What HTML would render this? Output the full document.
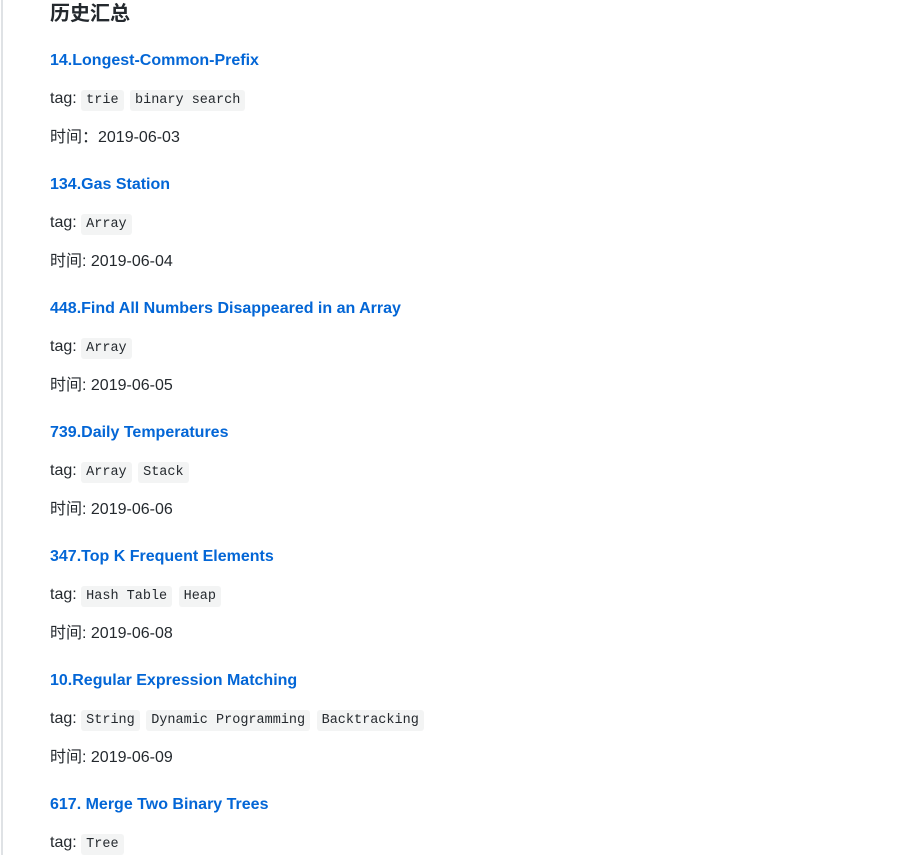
<!DOCTYPE html>
<html><head><meta charset="utf-8"><style>
html,body{margin:0;background:#fff;width:908px;height:855px;overflow:hidden}
body{position:relative;font-family:"Liberation Sans","Noto Sans CJK SC",sans-serif;color:#24292e;font-size:16px}
.bar{position:absolute;left:1px;top:0;width:2px;height:855px;background:#dfe2e5}
.wrap{position:absolute;left:50px;top:2px;height:853px;overflow:hidden}
h2{margin:0;height:47px;font-size:20px;line-height:24px;font-weight:bold}
.l{height:38px;line-height:24px;font-weight:bold;color:#0366d6}
.t{height:39px;line-height:24px}
.d{height:47px;line-height:24px}
code{font-family:"Liberation Mono",monospace;font-size:13.5px;background:#f3f4f4;border-radius:3px;padding:3px 5px;margin-right:2px}
</style></head><body>
<div class="bar"></div>
<div class="wrap">
<h2>历史汇总</h2>
<div class="l">14.Longest-Common-Prefix</div>
<div class="t">tag: <code>trie</code> <code>binary search</code></div>
<div class="d">时间：2019-06-03</div>
<div class="l">134.Gas Station</div>
<div class="t">tag: <code>Array</code></div>
<div class="d">时间: 2019-06-04</div>
<div class="l">448.Find All Numbers Disappeared in an Array</div>
<div class="t">tag: <code>Array</code></div>
<div class="d">时间: 2019-06-05</div>
<div class="l">739.Daily Temperatures</div>
<div class="t">tag: <code>Array</code> <code>Stack</code></div>
<div class="d">时间: 2019-06-06</div>
<div class="l">347.Top K Frequent Elements</div>
<div class="t">tag: <code>Hash Table</code> <code>Heap</code></div>
<div class="d">时间: 2019-06-08</div>
<div class="l">10.Regular Expression Matching</div>
<div class="t">tag: <code>String</code> <code>Dynamic Programming</code> <code>Backtracking</code></div>
<div class="d">时间: 2019-06-09</div>
<div class="l">617. Merge Two Binary Trees</div>
<div class="t">tag: <code>Tree</code></div>
</div>
</body></html>
